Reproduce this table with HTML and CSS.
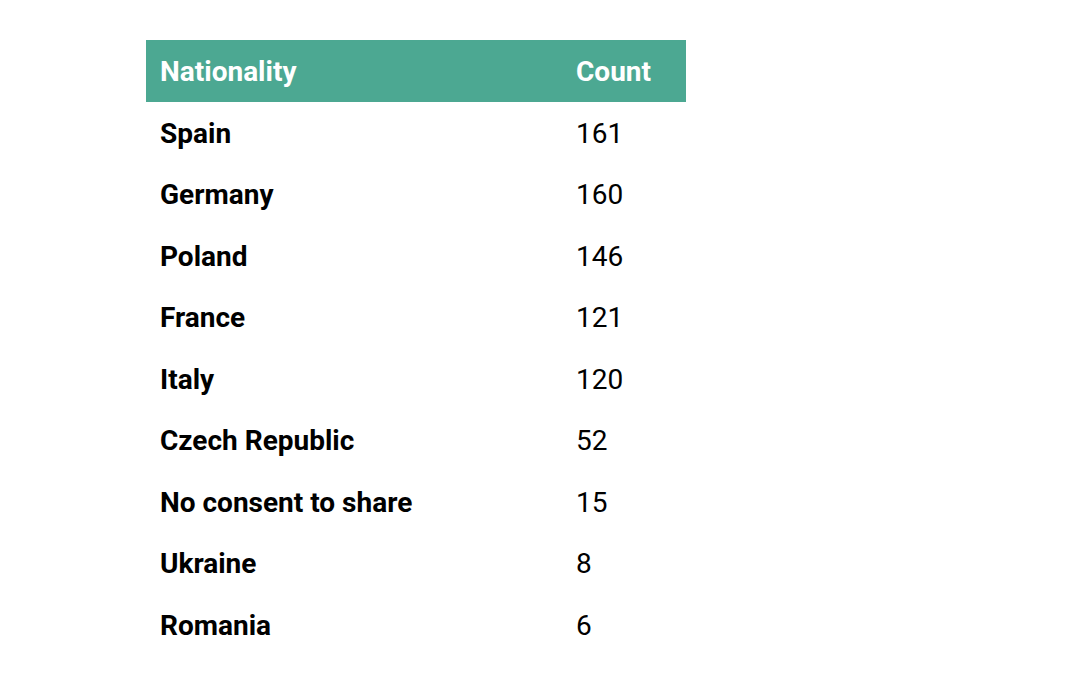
FILE: index.html
```html
<!DOCTYPE html>
<html>
<head>
<meta charset="utf-8">
<link rel="stylesheet" href="styles.css">
</head>
<body>
<table class="tbl">
  <colgroup><col class="col1"><col class="col2"></colgroup>
  <thead>
    <tr class="head"><th class="c1">Nationality</th><th class="c2">Count</th></tr>
  </thead>
  <tbody>
    <tr><td class="c1">Spain</td><td class="c2">161</td></tr>
    <tr><td class="c1">Germany</td><td class="c2">160</td></tr>
    <tr><td class="c1">Poland</td><td class="c2">146</td></tr>
    <tr><td class="c1">France</td><td class="c2">121</td></tr>
    <tr><td class="c1">Italy</td><td class="c2">120</td></tr>
    <tr><td class="c1">Czech Republic</td><td class="c2">52</td></tr>
    <tr><td class="c1">No consent to share</td><td class="c2">15</td></tr>
    <tr><td class="c1">Ukraine</td><td class="c2">8</td></tr>
    <tr><td class="c1">Romania</td><td class="c2">6</td></tr>
  </tbody>
</table>
</body>
</html>
```
FILE: styles.css
```css
html, body {
  margin: 0;
  padding: 0;
  background: #ffffff;
}
body {
  padding: 40px 0 0 146px;
  font-family: Roboto, "Liberation Sans", sans-serif;
  color: #000;
}
.tbl {
  border-collapse: collapse;
  table-layout: fixed;
  width: 540px;
  font-size: 28px;
}
.col1 { width: 416px; }
.col2 { width: 124px; }
.tbl th, .tbl td {
  padding: 2px 14px 0;
  text-align: left;
  vertical-align: middle;
  line-height: 32px;
  white-space: nowrap;
}
.head {
  background: #4ca892;
  height: 62px;
}
.head th {
  color: #fff;
  font-weight: 700;
}
.tbl tbody tr {
  height: 61.5px;
}
.c1 {
  font-weight: 700;
}
.c2 {
  font-weight: 400;
}
.head .c2 {
  font-weight: 700;
}
```
